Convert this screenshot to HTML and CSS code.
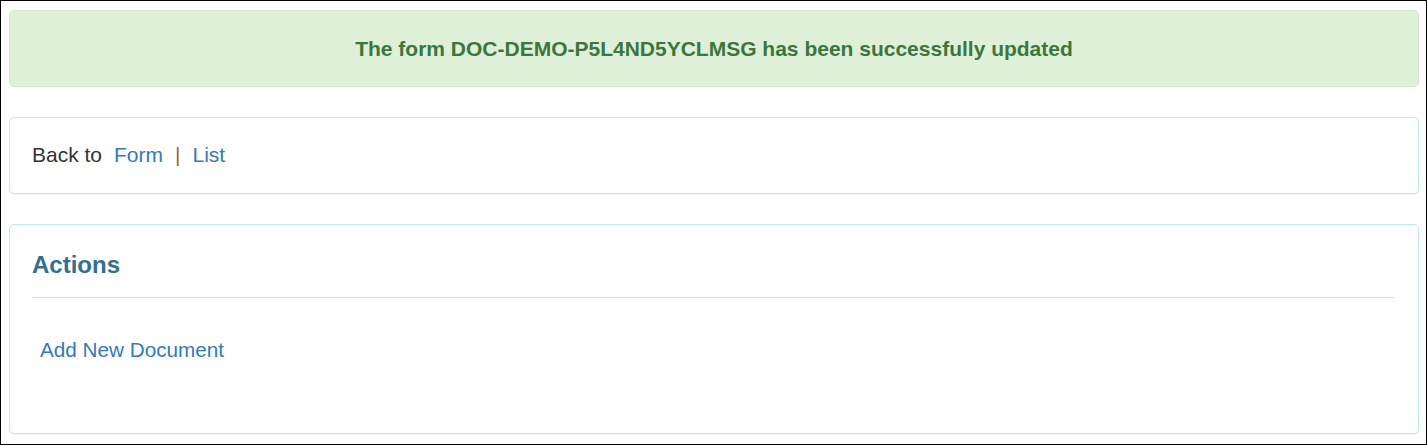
FILE: index.html
```html
<!DOCTYPE html>
<html lang="en">
<head>
<meta charset="utf-8">
<title>Form updated</title>
<link rel="stylesheet" href="styles.css">
</head>
<body>
<div class="frame">
  <div class="alert">The form DOC-DEMO-P5L4ND5YCLMSG has been successfully updated</div>
  <div class="panel nav-panel">
    <span class="back">Back to</span><a class="link gap" href="#">Form</a><span class="sep gap">|</span><a class="link gap" href="#">List</a>
  </div>
  <div class="panel actions-panel">
    <h3 class="panel-title">Actions</h3>
    <hr class="divider">
    <div class="action-list">
      <a class="link" href="#">Add New Document</a>
    </div>
  </div>
</div>
</body>
</html>
```

FILE: styles.css
```css
html, body {
  margin: 0;
  padding: 0;
  background: #fff;
}
body {
  font-family: "Liberation Sans", Arial, sans-serif;
  color: #333;
}
.frame {
  box-sizing: border-box;
  width: 1427px;
  height: 445px;
  border: 1px solid #000;
  padding: 9px 7px 0 8px;
  overflow: hidden;
}
.alert {
  box-sizing: border-box;
  height: 77px;
  background: #dff0d8;
  border: 1px solid #d6e9c6;
  border-radius: 5px;
  color: #3c763d;
  font-weight: bold;
  font-size: 21px;
  line-height: 31px;
  padding: 22px;
  text-align: center;
}
.panel {
  box-sizing: border-box;
  border: 1px solid #bce8f1;
  border-radius: 5px;
  background: #fff;
  margin-top: 30px;
  padding: 22px 23px 22px 22px;
  box-shadow: 0 1px 1px rgba(0,0,0,0.05);
}
.nav-panel {
  height: 77px;
  font-size: 21px;
  line-height: 30px;
}
.link {
  color: #337ab7;
  text-decoration: none;
}
.gap {
  margin-left: 12px;
}
.sep {
  color: #8a6d3b;
}
.actions-panel {
  height: 210px;
}
.panel-title {
  margin: 3px 0 0 0;
  font-size: 24px;
  line-height: 30px;
  font-weight: bold;
  color: #31708f;
}
.divider {
  border: 0;
  border-top: 1px solid #bce8f1;
  margin: 17px 0 0 0;
  height: 0;
}
.action-list {
  margin-top: 37px;
  padding-left: 8px;
  font-size: 20.7px;
  line-height: 30px;
}
```
